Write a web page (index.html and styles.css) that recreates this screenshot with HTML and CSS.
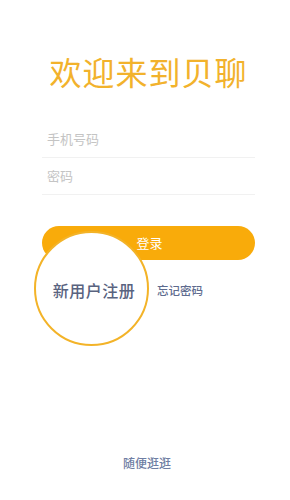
FILE: index.html
```html
<!DOCTYPE html>
<html lang="zh">
<head>
<meta charset="utf-8">
<link rel="stylesheet" href="styles.css">
</head>
<body>
<div class="page">
  <h1 class="title">欢迎来到贝聊</h1>
  <div class="form">
    <div class="field">手机号码</div>
    <div class="field">密码</div>
    <div class="btn">登录</div>
    <div class="links">
      <div class="circle"><span>新用户注册</span></div>
      <span class="forgot">忘记密码</span>
    </div>
  </div>
  <div class="browse">随便逛逛</div>
</div>
</body>
</html>
```
FILE: styles.css
```css
html, body {
  margin: 0;
  padding: 0;
  background: #ffffff;
}
body {
  font-family: "Noto Sans CJK SC", "Noto Sans", sans-serif;
}
.page {
  width: 290px;
  height: 500px;
  overflow: hidden;
}
.title {
  margin: 51px 0 0 0;
  padding-left: 7px;
  font-size: 32px;
  line-height: 40px;
  font-weight: 400;
  color: #f2b22c;
  text-align: center;
  letter-spacing: 1px;
}
.form {
  margin: 30px 35px 0 42px;
}
.field {
  height: 36px;
  line-height: 36px;
  padding-left: 5px;
  font-size: 13px;
  color: #c4c4c4;
  border-bottom: 1px solid #f1f1f1;
}
.btn {
  margin-top: 31px;
  height: 34px;
  line-height: 34px;
  border-radius: 17px;
  background: #f9ab0a;
  color: #ffffff;
  font-size: 13px;
  text-align: center;
  padding-left: 2px;
}
.links {
  position: relative;
  height: 60px;
  display: flex;
  align-items: center;
}
.circle {
  position: absolute;
  left: -8px;
  top: -29px;
  width: 111px;
  height: 111px;
  border: 2px solid #f3b328;
  border-radius: 50%;
  background: #ffffff;
  display: flex;
  align-items: center;
  justify-content: center;
}
.circle span {
  font-size: 16px;
  font-weight: 500;
  color: #59637f;
  letter-spacing: 0.5px;
  margin: 2px 0 0 5px;
}
.forgot {
  margin-left: 115px;
  font-size: 11.5px;
  font-weight: 500;
  color: #5e6b8e;
}
.browse {
  margin-top: 133px;
  line-height: 20px;
  font-size: 12px;
  font-weight: 500;
  color: #6f7ea3;
  text-align: center;
  padding-left: 4px;
}
```
